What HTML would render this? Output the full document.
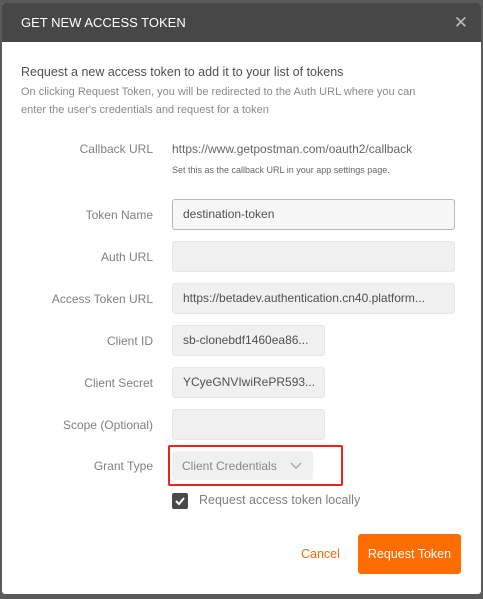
<!DOCTYPE html>
<html><head><style>
*{margin:0;padding:0;box-sizing:border-box}
body{width:483px;height:599px;background:#5a5a5a;font-family:"Liberation Sans",sans-serif;position:relative;overflow:hidden}
.m{position:absolute;left:2px;top:3px;width:479px;height:591px;background:#fff;border-radius:3px;overflow:hidden}
.h{height:39px;background:#474747;color:#fff;font-size:13px;padding:0 0 0 19px;line-height:39px;position:relative}
.x{position:absolute;right:13px;top:0;font-size:17px;color:#bbb}
.a{position:absolute;font-size:12px;color:#808080}
.l{position:absolute;right:328px;font-size:12px;color:#808080;text-align:right;white-space:nowrap}
.i{position:absolute;left:170px;height:31px;background:#f0f0f0;border:1px solid #e6e6e6;border-radius:3px;font-size:12px;color:#505050;padding-left:10px;line-height:29px;white-space:nowrap;overflow:hidden}
</style></head><body>
<div class="m">
<div class="h">GET NEW ACCESS TOKEN<span class="x">✕</span></div>
<div class="a" style="left:19px;top:62px;font-size:12.5px;color:#505050">Request a new access token to add it to your list of tokens</div>
<div class="a" style="left:19px;top:80px;font-size:11px;color:#8a8a8a;line-height:18px">On clicking Request Token, you will be redirected to the Auth URL where you can<br>enter the user's credentials and request for a token</div>
<div class="l" style="top:139px">Callback URL</div>
<div class="a" style="left:170px;top:139px;color:#666">https://www.getpostman.com/oauth2/callback</div>
<div class="a" style="left:170px;top:162px;font-size:9px;color:#666">Set this as the callback URL in your app settings page.</div>
<div class="l" style="top:205px">Token Name</div>
<div class="i" style="top:196px;width:283px;background:#f7f7f7;border-color:#b8b8b8">destination-token</div>
<div class="l" style="top:247px">Auth URL</div>
<div class="i" style="top:238px;width:283px"></div>
<div class="l" style="top:289px">Access Token URL</div>
<div class="i" style="top:280px;width:283px">https://betadev.authentication.cn40.platform...</div>
<div class="l" style="top:331px">Client ID</div>
<div class="i" style="top:322px;width:153px">sb-clonebdf1460ea86...</div>
<div class="l" style="top:373px">Client Secret</div>
<div class="i" style="top:364px;width:153px">YCyeGNVIwiRePR593...</div>
<div class="l" style="top:415px">Scope (Optional)</div>
<div class="i" style="top:406px;width:153px"></div>
<div class="l" style="top:456px">Grant Type</div>
<div class="i" style="top:448px;width:141px;height:29px;line-height:30px;border:none;color:#888">Client Credentials
<svg style="position:absolute;left:118px;top:11px" width="12" height="8"><path d="M1 1L6 6L11 1" stroke="#aaa" stroke-width="1.5" fill="none"/></svg></div>
<div style="position:absolute;left:166px;top:442px;width:175px;height:41px;border:2.5px solid #f0201a;border-radius:2px"></div>
<div style="position:absolute;left:170px;top:490px;width:16px;height:16px;background:#4a4a4a;border-radius:2px"><svg width="16" height="16"><path d="M4 8L7 11L12 5" stroke="#fff" stroke-width="2" fill="none"/></svg></div>
<div class="a" style="left:197px;top:490px;font-size:12.5px">Request access token locally</div>
<div class="a" style="left:299px;top:544px;color:#f26b00;font-size:12.5px">Cancel</div>
<div style="position:absolute;left:356px;top:531px;width:103px;height:40px;background:#ff6c00;border-radius:3px;color:#fff;font-size:12.5px;text-align:center;line-height:40px">Request Token</div>
</div>
</body></html>
